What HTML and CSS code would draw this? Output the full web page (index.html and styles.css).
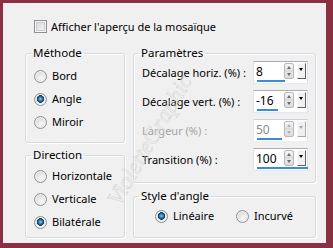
FILE: index.html
```html
<!DOCTYPE html>
<html lang="fr">
<head>
<meta charset="utf-8">
<link rel="stylesheet" href="styles.css">
</head>
<body>
<div class="frame">
  <div class="panel">
    <div class="check"><span class="cb"></span><span>Afficher l'aperçu de la mosaïque</span></div>
    <div class="cols">
      <div class="col">
        <fieldset class="grp methode">
          <legend>Méthode</legend>
          <div class="radios">
            <div class="radio"><span class="rb"></span>Bord</div>
            <div class="radio"><span class="rb on"></span>Angle</div>
            <div class="radio"><span class="rb"></span>Miroir</div>
          </div>
        </fieldset>
        <fieldset class="grp direction">
          <legend>Direction</legend>
          <div class="radios">
            <div class="radio"><span class="rb"></span>Horizontale</div>
            <div class="radio"><span class="rb"></span>Verticale</div>
            <div class="radio"><span class="rb on"></span>Bilatérale</div>
          </div>
        </fieldset>
      </div>
      <div class="col">
        <fieldset class="grp params">
          <legend>Paramètres</legend>
          <div class="rows">
            <div class="row">
              <span class="lbl">Décalage horiz. (%) :</span>
              <div class="spin">
                <div class="line"><span class="val">8</span><span class="ud"></span><span class="dd"></span></div>
                <span class="bar" style="width:28px"></span>
              </div>
            </div>
            <div class="row">
              <span class="lbl">Décalage vert. (%) :</span>
              <div class="spin">
                <div class="line"><span class="val">-16</span><span class="ud"></span><span class="dd"></span></div>
                <span class="bar" style="width:21px"></span>
              </div>
            </div>
            <div class="row off">
              <span class="lbl">Largeur (%) :</span>
              <div class="spin">
                <div class="line"><span class="val">50</span><span class="ud"></span><span class="dd"></span></div>
                <span class="bar" style="width:25px"></span>
              </div>
            </div>
            <div class="row">
              <span class="lbl">Transition (%) :</span>
              <div class="spin">
                <div class="line"><span class="val">100</span><span class="ud"></span><span class="dd"></span></div>
                <span class="bar" style="width:51px"></span>
              </div>
            </div>
          </div>
        </fieldset>
        <fieldset class="grp style">
          <legend>Style d'angle</legend>
          <div class="hradios">
            <div class="radio lin"><span class="rb on"></span>Linéaire</div>
            <div class="radio"><span class="rb"></span>Incurvé</div>
          </div>
        </fieldset>
      </div>
    </div>
    <div class="wm">VioletteGraphic</div>
  </div>
</div>
</body>
</html>
```
FILE: styles.css
```css
html, body {
  margin: 0;
  padding: 0;
}
body {
  width: 333px;
  height: 248px;
  background: #8b3043;
  font-family: "Noto Sans", "DejaVu Sans", sans-serif;
  font-size: 11px;
  color: #000;
  overflow: hidden;
}
.frame {
  padding: 3px 7px 5px 3px;
}
.panel {
  position: relative;
  box-sizing: border-box;
  width: 323px;
  height: 240px;
  background: #f0f0f0;
  padding: 16px 0 0 22px;
  overflow: hidden;
}
.check {
  display: flex;
  align-items: center;
  gap: 4px;
  height: 15px;
  margin: 0 0 12px 9px;
  line-height: 15px;
  white-space: nowrap;
}
.cb {
  box-sizing: border-box;
  width: 13px;
  height: 13px;
  border: 1px solid #8e8f8f;
  background: linear-gradient(135deg, #d4d5d8, #f7f7f7);
  box-shadow: inset 0 0 0 1px #f4f4f4, inset 0 0 0 2px #c9cbd0;
}
.cols {
  display: grid;
  grid-template-columns: 100px 183px;
  column-gap: 8px;
}
.col {
  display: flex;
  flex-direction: column;
}
.grp {
  box-sizing: border-box;
  margin: 0;
  min-width: 0;
  border: 1px solid #d5dae0;
  border-radius: 3px;
  box-shadow: 1px 1px 0 #fff, inset 1px 1px 0 #fff;
  padding: 0 7px 0 8px;
}
.grp legend {
  padding: 0 2px;
  margin-left: -3px;
  line-height: 14px;
  height: 14px;
  font-size: 11.5px;
}
.methode { height: 97px; }
.direction { height: 90px; margin-top: 5px; }
.params { height: 137px; }
.style { height: 49px; margin-top: 6px; }

.radios {
  display: flex;
  flex-direction: column;
  gap: 7px;
  padding-top: 8px;
}
.direction .radios { padding-top: 6px; }
.radio {
  display: flex;
  align-items: center;
  gap: 5px;
  height: 16px;
  line-height: 16px;
  white-space: nowrap;
}
.rb {
  box-sizing: border-box;
  width: 13px;
  height: 13px;
  border-radius: 50%;
  border: 1px solid #8e9093;
  background: radial-gradient(circle at 60% 65%, #f8f8f8 0, #e6e6e6 45%, #c7c9cc 100%);
  box-shadow: inset 0 0 0 1px #f2f2f2;
  flex: none;
}
.rb.on {
  background:
    radial-gradient(circle at 50% 45%, #8fd0f5 0, #3a86bb 1.6px, #154f7c 3px, #0c3350 3.6px, transparent 4px),
    radial-gradient(circle at 60% 65%, #f8f8f8 0, #e6e6e6 45%, #c7c9cc 100%);
}
.hradios {
  display: flex;
  padding: 5px 0 0 13px;
}
.radio.lin { width: 81px; }

.rows {
  display: flex;
  flex-direction: column;
  gap: 6px;
  padding-top: 1px;
}
.row {
  display: grid;
  grid-template-columns: 1fr 55px;
  align-items: center;
  height: 23px;
}
.lbl {
  line-height: 15px;
  white-space: nowrap;
}
.spin {
  box-sizing: border-box;
  height: 23px;
  border: 1px solid;
  border-color: #abadb3 #dbdfe6 #e3e9ef #e2e3ea;
  background: #fff;
  padding: 1px 1px 1px 2px;
  display: flex;
  flex-direction: column;
}
.line {
  display: flex;
  align-items: center;
  height: 16px;
}
.val {
  flex: 1;
  line-height: 16px;
  padding-top: 2px;
  font-size: 12px;
}
.ud {
  position: relative;
  box-sizing: border-box;
  width: 10px;
  height: 16px;
  margin-right: 3px;
  background: linear-gradient(#f6f6f6, #e2e2e2 45%, #c4c4c4 50%, #e8e8e8 55%, #dcdcdc);
  border: 1px solid #b8b8b8;
  border-radius: 2px;
}
.ud::before,
.ud::after {
  content: "";
  position: absolute;
  left: 1.5px;
  width: 0;
  height: 0;
  border-left: 2.5px solid transparent;
  border-right: 2.5px solid transparent;
}
.ud::before {
  top: 2px;
  border-bottom: 3px solid #6c6c6c;
}
.ud::after {
  bottom: 2px;
  border-top: 3px solid #6c6c6c;
}
.dd {
  position: relative;
  box-sizing: border-box;
  width: 9px;
  height: 16px;
  background: #f0f0f0;
  border: 1px solid;
  border-color: #f8f8f8 #646464 #646464 #f8f8f8;
}
.dd::after {
  content: "";
  position: absolute;
  top: 4px;
  left: 1px;
  border-left: 2.5px solid transparent;
  border-right: 2.5px solid transparent;
  border-top: 3px solid #000;
}
.bar {
  display: block;
  height: 2px;
  margin: 1px 0 0 1px;
  background: #3b8bd6;
}
.row.off .lbl { color: #a3a3a3; }
.row.off .spin { border-color: #cfd1d6 #e6e8ec #eceef1 #e8e9ee; }
.row.off .val { color: #8c8c8c; }
.row.off .ud::before { border-bottom-color: #b0b0b0; }
.row.off .ud::after { border-top-color: #b0b0b0; }
.row.off .dd::after { border-top-color: #a8a8a8; }
.row.off .dd { border-color: #f8f8f8 #a8a8a8 #a8a8a8 #f8f8f8; }

.wm {
  position: absolute;
  left: 62px;
  top: 124px;
  width: 170px;
  text-align: center;
  font-family: "Liberation Serif", serif;
  font-style: italic;
  font-size: 23px;
  line-height: 26px;
  color: transparent;
  -webkit-text-stroke: 0.5px #d4d4d4;
  transform: rotate(-60deg);
  pointer-events: none;
}
```
